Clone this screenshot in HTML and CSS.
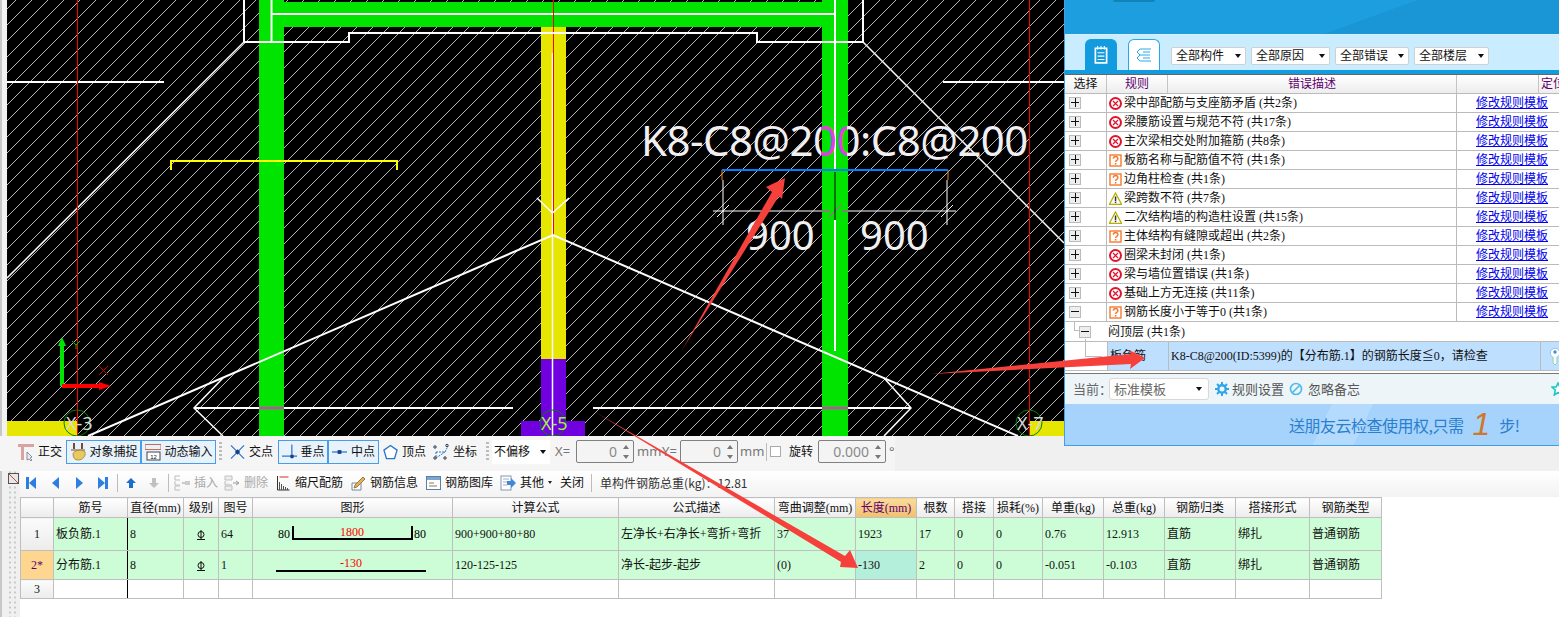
FILE: index.html
```html
<!DOCTYPE html>
<html lang="zh-CN">
<head>
<meta charset="utf-8">
<title>钢筋检查</title>
<link rel="stylesheet" href="styles.css">
</head>
<body>
<svg class="sprite" width="0" height="0" aria-hidden="true">
  <symbol id="i-err" viewBox="0 0 13 13"><circle cx="6.5" cy="6.5" r="5.5" fill="#fff" stroke="#e0142c" stroke-width="2"/><path d="M4 4l5 5M9 4l-5 5" stroke="#e0142c" stroke-width="1.2"/></symbol>
  <symbol id="i-ask" viewBox="0 0 13 13"><rect x="1" y="1" width="11" height="11" fill="#fff" stroke="#f47a30" stroke-width="1.4"/><path d="M4.3 4.8c0-3 4.6-3 4.6 0 0 1.6-2.3 1.6-2.3 3.2" fill="none" stroke="#f47a30" stroke-width="1.4"/><rect x="5.8" y="9" width="1.6" height="1.6" fill="#f47a30"/></symbol>
  <symbol id="i-warn" viewBox="0 0 13 13"><path d="M6.5 1L12.5 12.3H.5z" fill="#fff" stroke="#b5b000" stroke-width="1.3"/><rect x="5.8" y="4.5" width="1.5" height="4.5" fill="#333"/><rect x="5.8" y="9.6" width="1.5" height="1.5" fill="#333"/></symbol>
  <symbol id="i-ortho" viewBox="0 0 16 18"><path d="M0 1h16v3H6v13H3V4H0z" fill="#d9a3a0"/><path d="M9 9l5 5-2 1 2 2-1 1-2-2-2 1z" fill="#e8eef0" stroke="#667" stroke-width=".7"/></symbol>
  <symbol id="i-snap" viewBox="0 0 16 18"><path d="M4 0v6M12 0v6" stroke="#7a4a30" stroke-width="2"/><path d="M1 7h14" stroke="#7a4a30" stroke-width="1"/><path d="M3 11c0-4 10-5 12-2 1 4-2 8-7 8-3 0-5-2-5-6z" fill="#e8c860" stroke="#a08030" stroke-width=".8"/></symbol>
  <symbol id="i-cross" viewBox="0 0 16 16"><path d="M1 1l14 14M15 1L1 15" stroke="#2a75c8" stroke-width="1.3"/><rect x="6" y="6" width="4" height="4" fill="#143f80" transform="rotate(45 8 8)"/></symbol>
  <symbol id="i-perp" viewBox="0 0 16 16"><path d="M0 12.5h16M10.5 0v15" stroke="#2a75c8" stroke-width="1.3"/><rect x="9" y="11" width="3.4" height="3.4" fill="#143f80"/></symbol>
  <symbol id="i-mid" viewBox="0 0 16 16"><path d="M0 8h16" stroke="#2a75c8" stroke-width="1.3"/><rect x="6" y="6" width="4" height="4" fill="#143f80"/></symbol>
  <symbol id="i-vertex" viewBox="0 0 16 16"><path d="M8 1l7 5-2.7 9H3.700L1 6z" fill="#fff" stroke="#2a75c8" stroke-width="1.4"/></symbol>
  <symbol id="i-coord" viewBox="0 0 16 16"><path d="M3 8h9M3 8v6M12 8l3-6M3 14l9-6" stroke="#2a75c8" stroke-dasharray="2 1" fill="none"/><circle cx="2" cy="3" r="1.200" fill="none" stroke="#234"/><circle cx="14" cy="1.500" r="1.200" fill="none" stroke="#234"/><circle cx="2" cy="14" r="1.200" fill="none" stroke="#234"/><circle cx="12" cy="14" r="1.200" fill="none" stroke="#234"/></symbol>
  <symbol id="i-first" viewBox="0 0 12 14"><rect x="1" y="1" width="3" height="12" fill="#2c7fe0"/><path d="M11 1v12L4 7z" fill="#2c7fe0"/></symbol>
  <symbol id="i-prev" viewBox="0 0 12 14"><path d="M9 1v12L2 7z" fill="#2c7fe0"/></symbol>
  <symbol id="i-next" viewBox="0 0 12 14"><path d="M3 1v12l7-6z" fill="#2c7fe0"/></symbol>
  <symbol id="i-last" viewBox="0 0 12 14"><rect x="8" y="1" width="3" height="12" fill="#2c7fe0"/><path d="M1 1v12l7-6z" fill="#2c7fe0"/></symbol>
  <symbol id="i-up" viewBox="0 0 12 12"><path d="M6 1l5 5H8v5H4V6H1z" fill="#1c6cc8"/></symbol>
  <symbol id="i-down" viewBox="0 0 12 12"><path d="M6 11l5-5H8V1H4v5H1z" fill="#c0c0c0"/></symbol>
  <symbol id="i-insert" viewBox="0 0 16 16"><path d="M6 1H1v4h5M6 11H1v4h5M1 6v4h5" fill="none" stroke="#bdbdbd"/><path d="M8 8h3" stroke="#999"/><rect x="11" y="6" width="5" height="4" fill="#ccc"/></symbol>
  <symbol id="i-delete" viewBox="0 0 16 16"><path d="M8 1H1v4h7zM8 11H1v4h7zM1 6v4h7" fill="#eee" stroke="#c0c0c0"/><path d="M9 8h5M12 6l3 2-3 2" fill="none" stroke="#999"/></symbol>
  <symbol id="i-scale" viewBox="0 0 14 16"><path d="M1 1v14h12" fill="none" stroke="#333"/><path d="M3 15V7M5 15V9M7 15v-4M9 15v-3M11 15v-2" stroke="#555"/><path d="M3 2h9" stroke="#d03020"/></symbol>
  <symbol id="i-info" viewBox="0 0 15 16"><path d="M1 8h9v7H1z" fill="#fff" stroke="#789"/><path d="M4 10l8-8 2 2-8 8-3 1z" fill="#e8b050" stroke="#975"/></symbol>
  <symbol id="i-lib" viewBox="0 0 15 14"><rect x=".5" y=".5" width="14" height="13" fill="#fff" stroke="#5580a8"/><rect x="1" y="1" width="13" height="3" fill="#7aa6d0"/><path d="M3 7h5M3 10h8" stroke="#a07050"/></symbol>
  <symbol id="i-other" viewBox="0 0 16 16"><rect x="1" y="1" width="10" height="14" fill="#fff" stroke="#8899aa"/><path d="M3 4h6M3 7h4M3 10h4" stroke="#aab"/><path d="M7 6h4V3l5 5-5 5v-3H7z" fill="#3f86dc"/></symbol>
  <symbol id="i-gear" viewBox="0 0 14 14"><circle cx="7" cy="7" r="3.700" fill="none" stroke="#2fa6e8" stroke-width="2.400"/><path d="M7 0v3M7 11v3M0 7h3M11 7h3M2 2l2 2M10 10l2 2M12 2l-2 2M4 10l-2 2" stroke="#2fa6e8" stroke-width="2"/></symbol>
  <symbol id="i-ban" viewBox="0 0 14 14"><circle cx="7" cy="7" r="5.500" fill="none" stroke="#52bce8" stroke-width="1.700"/><path d="M3.500 10.500l7-7" stroke="#52bce8" stroke-width="1.700"/></symbol>
  <symbol id="i-book" viewBox="0 0 14 16"><path d="M2 2h10v13H2z" fill="none" stroke="#fff" stroke-width="1.500"/><path d="M4 0v3M7 0v3M10 0v3M4 6h6M4 9h6M4 12h6" stroke="#fff"/></symbol>
  <symbol id="i-list" viewBox="0 0 16 16"><path d="M1 5l3-3h11M1 5l3 3h10M1 11l3-3M1 11l3 3h11M7 5h7M7 11h7" fill="none" stroke="#2aa6ee"/></symbol>
  <symbol id="i-pin" viewBox="0 0 12 18"><circle cx="6" cy="6" r="4.700" fill="#fff" stroke="#9cc4e4"/><circle cx="6" cy="5" r="1.700" fill="#3c8ee0"/><path d="M4 10v6l2 2 2-2v-6" fill="#f4f8fc" stroke="#9cb"/></symbol>
  <symbol id="i-star" viewBox="0 0 14 14"><path d="M7 1l1.800 4H13l-3.300 3 1 5L7 10.500 3.300 13l1-5L1 5h4.200z" fill="#fff" stroke="#1cc8c8" stroke-width="1.600"/></symbol>
  <symbol id="i-level" viewBox="0 0 10 10"><circle cx="5" cy="4.500" r="3" fill="none" stroke="#111"/><path d="M5 0v9M1 9.500h8" stroke="#111"/></symbol>
</svg>

<main class="app">
  <div class="cad-row">
    <div class="edge"></div>
    <svg class="cad" viewBox="7 0 1057 436" width="1057" height="436" xmlns="http://www.w3.org/2000/svg">
      <defs>
        <pattern id="hatch" width="16" height="16" patternUnits="userSpaceOnUse"><path d="M-2 18L18 -2M-2 2L2 -2M14 18L18 14" stroke="#b8b8b8" stroke-width="1"/></pattern>
        <linearGradient id="label-fill" gradientUnits="userSpaceOnUse" x1="641" x2="1025" y1="0" y2="0">
          <stop offset="0.4687" stop-color="#f0f0f0"/><stop offset="0.4687" stop-color="#e040e0"/>
          <stop offset="0.5365" stop-color="#e040e0"/><stop offset="0.5365" stop-color="#f0f0f0"/>
        </linearGradient>
      </defs>
      <rect x="7" y="0" width="1057" height="436" fill="#000"/>
      <rect x="7" y="0" width="1057" height="436" fill="url(#hatch)"/>
      <path d="M164 82H7M943 82H1064" stroke="#fff" stroke-width="2"/>
      <path d="M244 42L7 278M863 42L1064 243" stroke="#fff" stroke-width="1.500" fill="none"/>
      <rect x="7" y="421" width="70" height="15" fill="#e6e600"/>
      <rect x="1029" y="421" width="35" height="15" fill="#e6e600"/>
      <rect x="541" y="27" width="25" height="332" fill="#e6e600"/>
      <rect x="541" y="359" width="25" height="77" fill="#7000e0"/>
      <rect x="521" y="421" width="64" height="15" fill="#7000e0"/>
      <rect x="259" y="0" width="25" height="436" fill="#00e400"/>
      <rect x="822" y="0" width="26" height="436" fill="#00e400"/>
      <rect x="259" y="2" width="589" height="25" fill="#00e400"/>
      <path d="M271.500 0V42M835 0V170M835 220V351M271 14H834" stroke="#fff" stroke-width="2"/>
      <path d="M552.500 53V436" stroke="#fff" stroke-width="1.500"/>
      <path d="M77.500 0V436M553.500 0V235M1029.500 0V436" stroke="#f00" stroke-width="1"/>
      <path d="M244 0V42H349V33H757V42H863V0" fill="none" stroke="#fff" stroke-width="2"/>
      <path d="M88 436L553 235L1018 436" fill="none" stroke="#fff" stroke-width="2"/>
      <path d="M223 378L194 408L223 436M884 378L911 408L884 436M537 198L552.500 213L569 198" fill="none" stroke="#fff" stroke-width="1.500"/>
      <path d="M194 408H513M593 408H911" stroke="#fff" stroke-width="2"/>
      <path d="M259 408H284M822 408H848" stroke="#ff20e0" stroke-width="2"/>
      <path d="M171 170V161H397V170" fill="none" stroke="#ffff00" stroke-width="2"/>
      <path d="M723 180V225M947 180V225M713 211H822M848 211H956M717 217L729 205M941 217L953 205" stroke="#fff" stroke-width="1"/>
      <path d="M822 211H830M842 211H848M829 217L841 205" stroke="#ff20e0" stroke-width="1"/>
      <path d="M835 172V220" stroke="#000" stroke-width="1"/>
      <path d="M722 180V170H948V180" fill="none" stroke="#ff8000" stroke-width="1"/>
      <path d="M722 170H948" stroke="#0080ff" stroke-width="2"/>
      <path d="M62 386V344" stroke="#00e400" stroke-width="4"/><path d="M62 337l4 9h-8z" fill="#00e400"/>
      <path d="M62 386H100" stroke="#f00" stroke-width="4"/><path d="M111 386l-12 4v-8z" fill="#f00"/>
      <path d="M72 341l4 4 4-4M76 345v4" stroke="#00c000" fill="none"/>
      <path d="M99 366l9 9M108 366l-9 9" stroke="#d00000"/>
      <circle cx="77" cy="423" r="13" fill="none" stroke="#008000"/>
      <circle cx="553" cy="423" r="13" fill="none" stroke="#008000"/>
      <circle cx="1029" cy="423" r="13" fill="none" stroke="#008000"/>
      <text x="641" y="156" class="cad-title" fill="url(#label-fill)">K8-C8@200:C8@200</text>
      <text x="746" y="250" class="cad-dim">900</text>
      <text x="860" y="250" class="cad-dim">900</text>
      <text x="66" y="430" class="cad-axis cad-axis-w">X-3</text>
      <text x="541" y="430" class="cad-axis cad-axis-g">X-5</text>
      <text x="1017" y="430" class="cad-axis cad-axis-w">X-7</text>
    </svg>
  </div>

  <div class="snapbar">
    <div class="tool"><svg class="ico16"><use href="#i-ortho"/></svg><span>正交</span></div>
    <div class="toggle w75 ml4"><svg class="ico16"><use href="#i-snap"/></svg><span>对象捕捉</span></div>
    <div class="toggle w75"><svg class="ico16" viewBox="0 0 16 18"><path d="M0 1.5h16M0 6.500h16M0 1v6M16 1v6" stroke="#c86858" stroke-width="1"/><rect x="2" y="9" width="13" height="8" fill="#fff" stroke="#444"/><text x="8.500" y="15.600" class="icon-num">12</text></svg><span>动态输入</span></div>
    <i class="grip"></i>
    <div class="tool ml5"><svg class="ico15"><use href="#i-cross"/></svg><span>交点</span></div>
    <div class="toggle w50 ml5"><svg class="ico15"><use href="#i-perp"/></svg><span>垂点</span></div>
    <div class="toggle w51"><svg class="ico15"><use href="#i-mid"/></svg><span>中点</span></div>
    <div class="tool ml4"><svg class="ico15"><use href="#i-vertex"/></svg><span>顶点</span></div>
    <div class="tool ml7"><svg class="ico16"><use href="#i-coord"/></svg><span>坐标</span></div>
    <i class="grip ml9"></i>
    <div class="offset">不偏移<b class="caret"></b></div>
    <span class="unit ml5 w21">X=</span>
    <div class="spin w58"><span>0</span><b class="updown"></b></div>
    <span class="unit ml3 w22">mm</span>
    <span class="unit ml3 w18">Y=</span>
    <div class="spin w58"><span>0</span><b class="updown"></b></div>
    <span class="unit ml2 w22">mm</span>
    <i class="vsep ml4"></i>
    <i class="check"></i>
    <span class="ml8">旋转</span>
    <div class="spin w68 ml5"><span>0.000</span><b class="updown"></b></div>
    <span class="unit ml3">°</span>
  </div>

  <div class="lower">
    <div class="gutter"><span class="close-x"></span></div>
    <div class="sheet">
      <div class="gridbar">
        <svg class="nav"><use href="#i-first"/></svg>
        <svg class="nav ml13"><use href="#i-prev"/></svg>
        <svg class="nav ml11"><use href="#i-next"/></svg>
        <svg class="nav ml12"><use href="#i-last"/></svg>
        <i class="vsep ml8"></i>
        <svg class="ico12 ml7"><use href="#i-up"/></svg>
        <svg class="ico12 ml11"><use href="#i-down"/></svg>
        <i class="vsep ml8"></i>
        <div class="tool off ml5"><svg class="ico16"><use href="#i-insert"/></svg><span>插入</span></div>
        <div class="tool off ml6"><svg class="ico16"><use href="#i-delete"/></svg><span>删除</span></div>
        <div class="tool ml8"><svg class="ico15"><use href="#i-scale"/></svg><span>缩尺配筋</span></div>
        <div class="tool ml8"><svg class="ico15"><use href="#i-info"/></svg><span>钢筋信息</span></div>
        <div class="tool ml8"><svg class="ico15"><use href="#i-lib"/></svg><span>钢筋图库</span></div>
        <div class="tool ml7"><svg class="ico16"><use href="#i-other"/></svg><span>其他</span><b class="caret caret-s"></b></div>
        <span class="ml8">关闭</span>
        <i class="vsep ml7"></i>
        <span class="weight ml8">单构件钢筋总重(kg)：12.81</span>
      </div>
      <table class="rebar">
        <colgroup>
          <col class="c33"><col class="c74"><col class="c56"><col class="c35"><col class="c34"><col class="c200"><col class="c166"><col class="c156"><col class="c81"><col class="c61"><col class="c38"><col class="c39"><col class="c49"><col class="c61"><col class="c61"><col class="c71"><col class="c74"><col class="c72">
        </colgroup>
        <thead>
          <tr><th></th><th>筋号</th><th>直径(mm)</th><th>级别</th><th>图号</th><th>图形</th><th>计算公式</th><th>公式描述</th><th>弯曲调整(mm)</th><th class="hot">长度(mm)</th><th>根数</th><th>搭接</th><th>损耗(%)</th><th>单重(kg)</th><th>总重(kg)</th><th>钢筋归类</th><th>搭接形式</th><th>钢筋类型</th></tr>
        </thead>
        <tbody>
          <tr class="r1">
            <th>1</th><td class="freeze">板负筋.1</td><td>8</td><td class="mid"><svg class="level"><use href="#i-level"/></svg></td><td>64</td>
            <td class="shape"><svg class="shape-svg" height="32"><text x="25" y="20">80</text><text x="161" y="20">80</text><path d="M40 8V21H159V8" fill="none" stroke="#000" stroke-width="2"/><text x="99" y="18" class="bar-len">1800</text></svg></td>
            <td>900+900+80+80</td><td>左净长+右净长+弯折+弯折</td><td>37</td><td>1923</td><td>17</td><td>0</td><td>0</td><td>0.76</td><td>12.913</td><td>直筋</td><td>绑扎</td><td>普通钢筋</td>
          </tr>
          <tr class="r2">
            <th class="cur">2*</th><td class="freeze">分布筋.1</td><td>8</td><td class="mid"><svg class="level"><use href="#i-level"/></svg></td><td>1</td>
            <td class="shape"><svg class="shape-svg" height="28"><path d="M23 20H173" stroke="#000" stroke-width="2"/><text x="98" y="16" class="bar-len">-130</text></svg></td>
            <td>120-125-125</td><td>净长-起步-起步</td><td>(0)</td><td class="sel">-130</td><td>2</td><td>0</td><td>0</td><td>-0.051</td><td>-0.103</td><td>直筋</td><td>绑扎</td><td>普通钢筋</td>
          </tr>
          <tr class="r3">
            <th>3</th><td class="freeze"></td><td></td><td></td><td></td><td></td><td></td><td></td><td></td><td></td><td></td><td></td><td></td><td></td><td></td><td></td><td></td><td></td>
          </tr>
        </tbody>
      </table>
    </div>
  </div>
</main>

<aside class="panel">
  <div class="panel-head"><i class="pill"></i></div>
  <div class="filters">
    <div class="tab tab-on"><svg class="ico16"><use href="#i-book"/></svg></div>
    <div class="tab"><svg class="ico16"><use href="#i-list"/></svg></div>
    <div class="drop d75">全部构件<b class="caret"></b></div>
    <div class="drop d79">全部原因<b class="caret"></b></div>
    <div class="drop d74">全部错误<b class="caret"></b></div>
    <div class="drop d75">全部楼层<b class="caret"></b></div>
  </div>
  <div class="list">
    <div class="list-head"><span>选择</span><span class="pur">规则</span><span class="pur">错误描述</span><span></span><span class="pur loc">定位</span></div>
    <div class="rule"><div class="cell-x"><i class="plus"></i></div><div class="rule-name"><svg class="ico13"><use href="#i-err"/></svg>梁中部配筋与支座筋矛盾 (共2条)</div><a class="edit">修改规则模板</a></div>
    <div class="rule"><div class="cell-x"><i class="plus"></i></div><div class="rule-name"><svg class="ico13"><use href="#i-err"/></svg>梁腰筋设置与规范不符 (共17条)</div><a class="edit">修改规则模板</a></div>
    <div class="rule"><div class="cell-x"><i class="plus"></i></div><div class="rule-name"><svg class="ico13"><use href="#i-err"/></svg>主次梁相交处附加箍筋 (共8条)</div><a class="edit">修改规则模板</a></div>
    <div class="rule"><div class="cell-x"><i class="plus"></i></div><div class="rule-name"><svg class="ico13"><use href="#i-ask"/></svg>板筋名称与配筋值不符 (共1条)</div><a class="edit">修改规则模板</a></div>
    <div class="rule"><div class="cell-x"><i class="plus"></i></div><div class="rule-name"><svg class="ico13"><use href="#i-ask"/></svg>边角柱检查 (共1条)</div><a class="edit">修改规则模板</a></div>
    <div class="rule"><div class="cell-x"><i class="plus"></i></div><div class="rule-name"><svg class="ico13"><use href="#i-warn"/></svg>梁跨数不符 (共7条)</div><a class="edit">修改规则模板</a></div>
    <div class="rule"><div class="cell-x"><i class="plus"></i></div><div class="rule-name"><svg class="ico13"><use href="#i-warn"/></svg>二次结构墙的构造柱设置 (共15条)</div><a class="edit">修改规则模板</a></div>
    <div class="rule"><div class="cell-x"><i class="plus"></i></div><div class="rule-name"><svg class="ico13"><use href="#i-ask"/></svg>主体结构有缝隙或超出 (共2条)</div><a class="edit">修改规则模板</a></div>
    <div class="rule"><div class="cell-x"><i class="plus"></i></div><div class="rule-name"><svg class="ico13"><use href="#i-err"/></svg>圈梁未封闭 (共1条)</div><a class="edit">修改规则模板</a></div>
    <div class="rule"><div class="cell-x"><i class="plus"></i></div><div class="rule-name"><svg class="ico13"><use href="#i-err"/></svg>梁与墙位置错误 (共1条)</div><a class="edit">修改规则模板</a></div>
    <div class="rule"><div class="cell-x"><i class="plus"></i></div><div class="rule-name"><svg class="ico13"><use href="#i-err"/></svg>基础上方无连接 (共11条)</div><a class="edit">修改规则模板</a></div>
    <div class="rule"><div class="cell-x"><i class="minus"></i></div><div class="rule-name"><svg class="ico13"><use href="#i-ask"/></svg>钢筋长度小于等于0 (共1条)</div><a class="edit">修改规则模板</a></div>
    <div class="floor"><div class="cell-y"><i class="tree-a"></i><i class="minus"></i></div><div class="floor-name">闷顶层 (共1条)</div></div>
    <div class="detail"><div class="cell-z"><i class="tree-b"></i></div><div class="d-type">板负筋</div><div class="d-msg">K8-C8@200(ID:5399)的【分布筋.1】的钢筋长度≦0，请检查</div><div class="d-pin"><svg class="pin"><use href="#i-pin"/></svg></div></div>
  </div>
  <div class="panel-foot">
    <span class="cur-label">当前：</span>
    <div class="template">标准模板<b class="caret"></b></div>
    <svg class="ico14 ml6"><use href="#i-gear"/></svg><span class="foot-link ml3">规则设置</span>
    <svg class="ico14 ml5"><use href="#i-ban"/></svg><span class="foot-link ml5">忽略备忘</span>
    <svg class="ico14 star"><use href="#i-star"/></svg>
  </div>
  <div class="banner"><span class="promo">送朋友云检查使用权,只需</span><em class="promo-n">1</em><span class="promo">步!</span></div>
</aside>

<svg class="marks" width="1559" height="617" viewBox="0 0 1559 617" aria-hidden="true">
  <path d="M682 350L772 192L766 187L785 178L782 199L779 196Z" fill="#f5403c"/>
  <path d="M931 374L1131 354L1129 350L1145 358L1130 369L1131 364Z" fill="#f5403c"/>
  <path d="M595 412L845 556L850 550L858 568L840 567L841 562Z" fill="#f5403c"/>
</svg>
</body>
</html>
```

FILE: styles.css
```css
* { box-sizing: border-box; }
html, body { margin: 0; padding: 0; }
body {
  width: 1559px; height: 617px; overflow: hidden; position: relative;
  background: #fff; color: #111;
  font: 12px/1 "Liberation Serif", "Noto Sans CJK SC", sans-serif;
}
.sprite { position: absolute; }
.app { display: flex; flex-direction: column; height: 617px; }
.cad-row { display: flex; height: 436px; flex: none; }
.edge { width: 7px; background: linear-gradient(90deg, #c8c8c8 0 2px, #f2f2f2 2px); }
.cad { display: block; flex: none; }
.cad-title { font: 42px "Noto Sans", sans-serif; letter-spacing: -.55px; }
.cad-dim { font: 40px "Noto Sans", sans-serif; fill: #f0f0f0; }
.cad-axis { font: 18px "Noto Sans", sans-serif; }
.cad-axis-w { fill: #d8d8d8; }
.cad-axis-g { fill: #a0f040; }
.icon-num { font: 6px "Liberation Sans", sans-serif; text-anchor: middle; fill: #111; }

/* toolbars */
.snapbar {
  height: 35px; flex: none; display: flex; align-items: center; padding: 0 0 4px 18px; white-space: nowrap;
  background: linear-gradient(90deg, #f5f5f5 895px, #f0f0f0 895px);
}
.tool { display: flex; align-items: center; gap: 4px; flex: none; }
.tool.off { color: #a8a8a8; }
.toggle {
  display: flex; align-items: center; justify-content: center; gap: 4px; height: 24px; flex: none;
  border: 1px solid #4a9ce6; background: #e8f2fb;
}
.w75 { width: 75px; } .w50 { width: 50px; } .w51 { width: 51px; }
.ml2 { margin-left: 2px; } .ml3 { margin-left: 3px; } .ml4 { margin-left: 4px; } .ml5 { margin-left: 5px; }
.ml6 { margin-left: 6px; } .ml7 { margin-left: 7px; } .ml8 { margin-left: 8px; } .ml9 { margin-left: 9px; }
.ml11 { margin-left: 11px; } .ml12 { margin-left: 12px; } .ml13 { margin-left: 13px; }
.ico12 { width: 12px; height: 12px; flex: none; }
.ico13 { width: 13px; height: 13px; flex: none; margin-right: 2px; }
.ico14 { width: 14px; height: 14px; flex: none; }
.ico15 { width: 15px; height: 16px; flex: none; }
.ico16 { width: 16px; height: 18px; flex: none; }
.nav { width: 12px; height: 14px; flex: none; }
.grip {
  width: 3px; height: 20px; margin: 0 3px; flex: none;
  background: repeating-linear-gradient(180deg, #bbb 0 2px, transparent 2px 4px);
}
.grip.ml9 { margin-left: 9px; }
.vsep { width: 1px; height: 18px; background: #bdbdbd; flex: none; }
.offset {
  width: 58px; height: 24px; padding-left: 2px; background: #fff; flex: none;
  display: flex; align-items: center; justify-content: space-between; padding-right: 4px;
}
.caret { width: 0; height: 0; border: 3.500px solid transparent; border-top: 4px solid #111; border-bottom: 0; flex: none; }
.caret-s { border-width: 3px 2.500px 0; border-top-color: #222; }
.unit { color: #777; font-family: "Noto Sans", sans-serif; font-size: 13px; flex: none; }
.w21 { width: 21px; } .w22 { width: 22px; } .w18 { width: 18px; }
.spin {
  height: 23px; border: 1px solid #808080; border-radius: 2px; background: #f4f4f4; flex: none;
  display: flex; align-items: center; justify-content: flex-end; padding-right: 3px; gap: 6px;
  color: #8a8a8a; font: 14px "Noto Sans", sans-serif;
}
.w58 { width: 58px; } .w68 { width: 68px; }
.updown { width: 7px; height: 14px; position: relative; }
.updown::before, .updown::after { content: ""; position: absolute; left: 0; border: 3.500px solid transparent; }
.updown::before { top: 0; border-bottom: 4px solid #777; border-top: 0; }
.updown::after { bottom: 0; border-top: 4px solid #777; border-bottom: 0; }
.check { width: 11px; height: 11px; border: 1px solid #aaa; background: #fff; margin-left: 3px; flex: none; }

.lower { display: flex; flex: 1; background: #fff; }
.gutter {
  width: 20px; flex: none; padding: 2px 0 0 8px;
  background:
    linear-gradient(90deg, #c8c8c8 0 2px, transparent 2px),
    radial-gradient(circle, #c8c8c8 1px, transparent 1.200px) 8px 14px / 4px 5px repeat-y,
    radial-gradient(circle, #c8c8c8 1px, transparent 1.200px) 13px 14px / 4px 5px repeat-y,
    #f0f0f0;
}
.close-x {
  display: block; width: 11px; height: 11px; border: 1px solid #555;
  background: linear-gradient(45deg, #e8e8e8 45%, #c44 45% 55%, #e8e8e8 55%), #ddd;
}
.sheet { flex: 1; display: flex; flex-direction: column; min-width: 0; }
.gridbar {
  height: 26px; flex: none; display: flex; align-items: center; padding: 0 0 3px 5px; white-space: nowrap;
  background: linear-gradient(180deg, #fff, #f2f2f2);
}
.weight { font-family: "Noto Sans CJK SC", sans-serif; color: #333; }

/* rebar table */
.rebar { border-collapse: collapse; table-layout: fixed; width: 1361px; }
.c33 { width: 33px; } .c74 { width: 74px; } .c56 { width: 56px; } .c35 { width: 35px; } .c34 { width: 34px; }
.c200 { width: 200px; } .c166 { width: 166px; } .c156 { width: 156px; } .c81 { width: 81px; } .c61 { width: 61px; }
.c38 { width: 38px; } .c39 { width: 39px; } .c49 { width: 49px; } .c71 { width: 71px; } .c72 { width: 72px; }
.rebar th, .rebar td { border: 1px solid #bfbfbf; padding: 0; font-weight: 400; }
.rebar thead th { height: 20px; text-align: center; background: linear-gradient(180deg, #fff, #ececec); }
.rebar thead th.hot { background: linear-gradient(180deg, #f9dc9e, #f1c06e); color: #60006f; }
.rebar tbody th { text-align: center; background: linear-gradient(180deg, #fbfbfb, #ececec); }
.rebar tbody td { padding-left: 2px; }
.rebar tbody th.cur { background: #ffd68f; color: #60006f; }
.r1 { height: 33px; } .r2 { height: 29px; } .r3 { height: 19px; }
.r1 td, .r2 td { background: #ccfdd6; }
.r2 td.sel { background: #b4efdc; }
.rebar td.freeze { border-right: 1px solid #000; }
.rebar td.mid { text-align: center; padding: 0; }
.rebar td.shape { padding: 0; }
.shape-svg { display: block; width: 199px; font: 12px "Liberation Serif", serif; }
.bar-len { fill: #f00; text-anchor: middle; }
.level { width: 10px; height: 10px; vertical-align: middle; }

/* check panel */
.panel {
  position: absolute; left: 1064px; top: 0; width: 495px; height: 446px;
  display: flex; flex-direction: column; background: #fff;
  border-left: 1px solid #3f9fe6; border-bottom: 1px solid #3f9fe6;
}
.panel-head {
  height: 35px; flex: none; padding-left: 48px; border-bottom: 1px solid #d8eefc;
  background: linear-gradient(160deg, #1d9fdf 60%, #1a96d6 60%);
}
.pill { display: block; width: 42px; height: 2px; background: #0f84b8; border-radius: 0 0 4px 4px; }
.filters {
  height: 35px; flex: none; display: flex; align-items: flex-end; padding-left: 20px; gap: 5px;
  background: #c9ecff; border-bottom: 4px solid #129cdf;
  box-sizing: content-box;
}
.tab {
  width: 32px; height: 31px; border-radius: 6px 6px 0 0; background: #fff; border: 1px solid #2aa6ee; border-bottom: 0;
  display: flex; align-items: center; justify-content: center; margin-right: 6px; flex: none;
}
.tab-on { background: #129cdf; border-color: #129cdf; }
.drop {
  height: 18px; margin-bottom: 5px; background: #fff; border: 1px solid #d0d0d0; border-radius: 2px; flex: none;
  display: flex; align-items: center; justify-content: space-between; padding: 0 4px; font-size: 12px;
}
.d75 { width: 75px; } .d79 { width: 79px; } .d74 { width: 74px; }
.list { flex: none; color: #111; border-top: 1px solid #666; }
.list-head {
  height: 19px; display: grid; grid-template-columns: 42px 61px 289px 82px 1fr; align-items: stretch;
  background: linear-gradient(180deg, #fff, #ededed); border-bottom: 1px solid #bbb;
}
.list-head span { display: flex; align-items: center; justify-content: center; border-right: 1px solid #c4c4c4; }
.list-head .loc { justify-content: flex-start; padding-left: 2px; border-right: 0; white-space: nowrap; overflow: hidden; }
.pur { color: #60006f; }
.rule {
  height: 19px; display: grid; grid-template-columns: 42px 350px 1fr; align-items: stretch; border-bottom: 1px solid #bbb;
}
.cell-x { display: flex; align-items: center; padding-left: 4px; border-right: 1px solid #bbb; }
.rule-name { display: flex; align-items: center; padding-left: 2px; border-right: 1px solid #bbb; white-space: pre; }
.edit { color: #0000ee; text-decoration: underline; padding-left: 19px; align-self: center; white-space: nowrap; }
.plus, .minus {
  display: block; width: 12px; height: 12px; border: 1px solid #bbb; background: #eee; position: relative; flex: none;
}
.plus::before, .minus::before { content: ""; position: absolute; left: 1px; top: 4px; width: 8px; height: 1px; background: #111; }
.plus::after { content: ""; position: absolute; left: 5px; top: 0; width: 1px; height: 9px; background: #111; }
.floor { height: 19px; display: grid; grid-template-columns: 42px 1fr; }
.cell-y { position: relative; display: flex; align-items: center; padding-left: 14px; }
.tree-a { position: absolute; left: 9px; top: -1px; width: 6px; height: 10px; border: 1px solid #bbb; border-width: 0 0 1px 1px; }
.floor-name { display: flex; align-items: center; padding-left: 1px; white-space: pre; }
.detail { height: 30px; display: grid; grid-template-columns: 42px 61px 372px 1fr; border-top: 1px solid #bbb; border-bottom: 1px solid #bbb; }
.cell-z { position: relative; }
.tree-b { position: absolute; left: 20px; top: -3px; width: 17px; height: 18px; border: 1px solid #bbb; border-width: 0 0 1px 1px; }
.d-type, .d-msg, .d-pin { background: #bfdfff; display: flex; align-items: center; border-left: 1px solid #bbb; white-space: nowrap; }
.d-type, .d-msg { padding-left: 2px; }
.d-pin { padding-left: 8px; }
.pin { width: 12px; height: 18px; }
.panel-foot {
  margin-top: 2px; height: 31px; flex: none; display: flex; align-items: center; padding-left: 8px; position: relative;
  background: #eef5f9; border-top: 1px solid #777; font-size: 13px; color: #666; white-space: nowrap;
}
.cur-label { width: 36px; flex: none; }
.template {
  width: 100px; height: 22px; background: #fff; border: 1px solid #d8d8d8; border-radius: 3px; flex: none;
  display: flex; align-items: center; justify-content: space-between; padding: 0 6px 0 4px;
}
.foot-link { color: #555; }
.star { position: absolute; left: 486px; top: 8px; }
.banner {
  flex: 1; display: flex; align-items: center; padding-left: 224px; gap: 9px;
  background:
    linear-gradient(115deg, transparent 52%, #b4dafd 52% 60%, transparent 60%),
    #a6d3fc;
}
.promo { color: #2a7fce; font: 16px "Noto Sans CJK SC", sans-serif; white-space: nowrap; letter-spacing: -.5px; }
.promo-n { color: #d0782a; font: italic 400 32px "Liberation Sans", sans-serif; }

.marks { position: absolute; left: 0; top: 0; pointer-events: none; }
```
